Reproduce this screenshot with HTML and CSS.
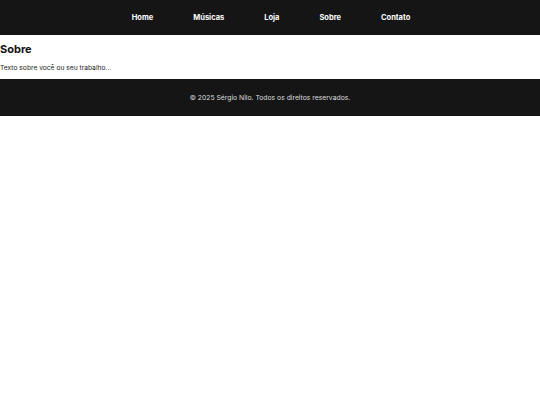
FILE: index.html
```html
<!DOCTYPE html>
<html lang="pt-BR">
<head>
<meta charset="utf-8">
<title>Sérgio Nilo</title>
<link rel="stylesheet" href="styles.css">
</head>
<body>
<header class="site-header">
  <nav class="nav">
    <a href="#">Home</a>
    <a href="#">Músicas</a>
    <a href="#">Loja</a>
    <a href="#">Sobre</a>
    <a href="#">Contato</a>
  </nav>
</header>
<main class="content">
  <h2 class="title">Sobre</h2>
  <p class="text">Texto sobre você ou seu trabalho...</p>
</main>
<footer class="site-footer">
  <p>© 2025 Sérgio Nilo. Todos os direitos reservados.</p>
</footer>
</body>
</html>
```
FILE: styles.css
```css
* { box-sizing: border-box; }
body {
  margin: 0;
  font-family: "Inter", "Liberation Sans", sans-serif;
  background: #fff;
  color: #111;
}
.site-header {
  background: #151515;
  height: 35px;
  display: flex;
  align-items: center;
  justify-content: center;
}
.nav {
  display: flex;
  gap: 40px;
  padding-left: 2px;
}
.nav a {
  color: #fff;
  text-decoration: none;
  font-size: 7.5px;
  font-weight: 700;
}
.content {
  padding: 7px 0 7px;
}
.title {
  margin: 0;
  font-size: 11px;
  font-weight: 700;
}
.text {
  margin: 8px 0 0;
  font-size: 6.7px;
  color: #222;
}
.site-footer {
  background: #151515;
  height: 37px;
  display: flex;
  align-items: center;
  justify-content: center;
}
.site-footer p {
  margin: 0;
  color: #ddd;
  font-size: 6.8px;
}
```
